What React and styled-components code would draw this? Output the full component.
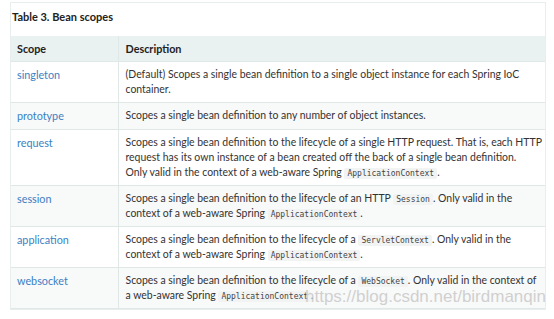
import React from "react";
import styled, { createGlobalStyle } from "styled-components";

const Global = createGlobalStyle`
  html, body { margin: 0; padding: 0; background: #fff; }
  body { width: 554px; height: 319px; overflow: hidden; }
`;

const Page = styled.div`
  position: relative;
  padding: 2px 8px 0 10px;
  font-family: Lato, "Noto Sans", sans-serif;
  font-size: 10.45px;
  color: #333;
`;

const Panel = styled.div`
  width: 536px;
  border: 1px solid #e8eded;
  box-sizing: border-box;
`;

const Title = styled.div`
  font-weight: bold;
  font-size: 11px;
  color: #222;
  height: 33px;
  padding: 7px 0 0 1px;
  box-sizing: border-box;
`;

const Table = styled.table`
  width: 100%;
  border-collapse: collapse;
  table-layout: fixed;
`;

const HeadCell = styled.th`
  background: #eaf1f1;
  text-align: left;
  font-weight: bold;
  font-size: 10.8px;
  color: #222;
  height: 25px;
  padding: 0 6px;
  border-right: 1px solid #e0e7e7;
  border-bottom: 1px solid #e0e7e7;
  &:last-child { border-right: none; padding-left: 7px; }
`;

const Row = styled.tr`
  background: ${(p) => (p.$alt ? "#f8f9f9" : "#fff")};
`;

const Cell = styled.td`
  vertical-align: top;
  line-height: 15px;
  padding: 5px 0 5px 7px;
  border-right: 1px solid #e0e7e7;
  border-bottom: 1px solid #e0e7e7;
  &:first-child { padding-left: 6px; }
  &:last-child { border-right: none; }
`;

const ScopeLink = styled.a`
  color: #3b7fc4;
  font-size: 10.8px;
  text-decoration: none;
`;

const Code = styled.code`
  font-family: "DejaVu Sans Mono", "Liberation Mono", monospace;
  font-size: 8px;
  line-height: 1;
  background: #f2f3f3;
  border-radius: 2px;
  padding: 1px 3px;
  color: #444;
`;

const Watermark = styled.div`
  position: absolute;
  right: 8px;
  top: 287px;
  font-family: "Liberation Sans", Arial, sans-serif;
  font-size: 17px;
  color: rgba(200, 200, 200, 0.85);
  pointer-events: none;
`;

const rows = [
  ["singleton", <>(Default) Scopes a single bean definition to a single object instance for each Spring IoC container.</>],
  ["prototype", <>Scopes a single bean definition to any number of object instances.</>],
  ["request", <>Scopes a single bean definition to the lifecycle of a single HTTP request. That is, each HTTP request has its own instance of a bean created off the back of a single bean definition.<br />Only valid in the context of a web-aware Spring <Code>ApplicationContext</Code>.</>],
  ["session", <>Scopes a single bean definition to the lifecycle of an HTTP <Code>Session</Code>. Only valid in the context of a web-aware Spring <Code>ApplicationContext</Code>.</>],
  ["application", <>Scopes a single bean definition to the lifecycle of a <Code>ServletContext</Code>. Only valid in the context of a web-aware Spring <Code>ApplicationContext</Code>.</>],
  ["websocket", <>Scopes a single bean definition to the lifecycle of a <Code>WebSocket</Code>. Only valid in the context of<br />a web-aware Spring <Code>ApplicationContext</Code>.</>],
];

export default function App() {
  return (
    <>
      <Global />
      <Page>
        <Panel>
          <Title>Table 3. Bean scopes</Title>
          <Table>
            <colgroup>
              <col style={{ width: "107px" }} />
              <col />
            </colgroup>
            <thead>
              <tr>
                <HeadCell>Scope</HeadCell>
                <HeadCell>Description</HeadCell>
              </tr>
            </thead>
            <tbody>
              {rows.map(([name, desc], i) => (
                <Row key={name} $alt={i % 2 === 1}>
                  <Cell><ScopeLink href="#">{name}</ScopeLink></Cell>
                  <Cell>{desc}</Cell>
                </Row>
              ))}
            </tbody>
          </Table>
        </Panel>
        <Watermark>https://blog.csdn.net/birdmanqin</Watermark>
      </Page>
    </>
  );
}
